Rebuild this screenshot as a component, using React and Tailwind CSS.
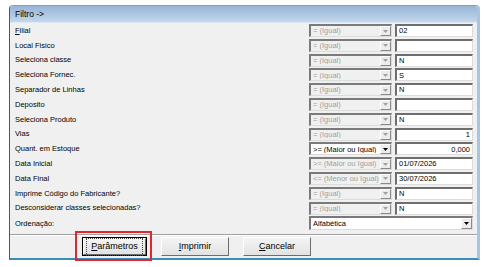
import React from "react";

const rows = [
  { label: <><u>F</u>ilial</>, op: "= (Igual)", value: "02" },
  { label: "Local Fisico", op: "= (Igual)", value: "" },
  { label: "Seleciona classe", op: "= (Igual)", value: "N" },
  { label: "Seleciona Fornec.", op: "= (Igual)", value: "S" },
  { label: "Separador de Linhas", op: "= (Igual)", value: "N" },
  { label: "Deposito", op: "= (Igual)", value: "" },
  { label: "Seleciona Produto", op: "= (Igual)", value: "N" },
  { label: "Vias", op: "= (Igual)", value: "1", right: true },
  { label: "Quant. em Estoque", op: ">= (Maior ou Igual)", value: "0,000", right: true, enabled: true },
  { label: "Data Inicial", op: ">= (Maior ou Igual)", value: "01/07/2026" },
  { label: "Data Final", op: "<= (Menor ou Igual)", value: "30/07/2026" },
  { label: "Imprime Código do Fabricante?", op: "= (Igual)", value: "N" },
  { label: "Desconsiderar classes selecionadas?", op: "= (Igual)", value: "N" },
];

function Arrow({ enabled }) {
  return (
    <svg width="5" height="3" viewBox="0 0 5 3">
      <path d="M0 0H5L2.5 3Z" fill={enabled ? "#000" : "#a0a0a0"} />
    </svg>
  );
}

function Combo({ op, enabled, className = "h-[13px]" }) {
  return (
    <div
      className={`${className} flex items-center border-t-[2px] border-l-[2px] border-t-[#7a7a7a] border-l-[#7a7a7a] border-b border-r border-b-[#dcdcdc] border-r-[#dcdcdc] ${
        enabled ? "bg-white" : "bg-[#f0f0f0]"
      }`}
    >
      <span
        className={`flex-1 pl-[2px] text-[7.5px] leading-none whitespace-nowrap overflow-hidden ${
          enabled ? "text-black" : "text-[#a0a0a0]"
        }`}
      >
        {op}
      </span>
      <div className="w-[11px] h-full flex items-center justify-center bg-[#ececec] border-t border-l border-t-white border-l-white border-b border-r border-b-[#8a8a8a] border-r-[#8a8a8a]">
        <Arrow enabled={enabled} />
      </div>
    </div>
  );
}

function Input({ value, right }) {
  return (
    <div
      className={`h-[13px] flex items-center bg-white border-t-[2px] border-l-[2px] border-t-[#6e6e6e] border-l-[#6e6e6e] border-b border-r border-b-[#dcdcdc] border-r-[#dcdcdc] px-[2px] text-[7.5px] leading-none text-black ${
        right ? "justify-end" : "justify-start"
      }`}
    >
      {value}
    </div>
  );
}

function Button({ children, w, def }) {
  const inner = (
    <div
      className={`h-full w-full flex items-center justify-center bg-gradient-to-b from-[#f4f4f4] to-[#e2e2e2] border-t border-l border-t-white border-l-white border-b border-r border-b-[#6d6d6d] border-r-[#6d6d6d] text-[9px] text-black`}
    >
      {def ? (
        <div className="px-[4px] py-[1px] border border-dotted border-[#444]">{children}</div>
      ) : (
        children
      )}
    </div>
  );
  return (
    <div className={`relative h-[19px] ${w} ${def ? "border border-black" : ""}`}>
      {inner}
      {def && (
        <div className="absolute -left-[8px] -right-[6px] -top-[7px] -bottom-[6px] border-2 border-[#e3262b]" />
      )}
    </div>
  );
}

export default function App() {
  return (
    <div className="w-[487px] h-[267px] bg-white font-['Liberation_Sans',Arial,sans-serif] pt-[5px] pl-[9px]">
      <div className="w-[471px] rounded-t-[4px] bg-[#f0f0f0] border-t border-t-[#9a9a9a] border-l border-l-[#4d5866] border-r-[3px] border-r-[#a6c6df] border-b-[2px] border-b-[#3a8db5]">
        <div className="h-[16px] rounded-tl-[3px] rounded-tr-[2px] bg-gradient-to-b from-[#98b5d5] to-[#c3d7ed] pl-[5px] flex items-center text-[8.5px] text-black">
          Filtro -&gt;
        </div>
        <div className="h-[1px] bg-[#dfe9f4]" />
        <div className="pt-[1px] pl-[5px] grid grid-cols-[291px_83px_78px] gap-x-[3px] gap-y-[1.8px]">
          {rows.map((r, i) => (
            <React.Fragment key={i}>
              <div className="h-[13px] flex items-center text-[7.5px] text-black whitespace-nowrap">
                {r.label}
              </div>
              <Combo op={r.op} enabled={r.enabled} />
              <Input value={r.value} right={r.right} />
            </React.Fragment>
          ))}
          <div className="h-[14px] flex items-center text-[7.5px] text-black">Ordenação:</div>
          <div className="col-span-2">
            <Combo op={<span className="text-black">Alfabética</span>} enabled className="h-[14px]" />
          </div>
        </div>
        <div className="mt-[4px] h-[1px] bg-[#a0a0a0]" />
        <div className="h-[1px] bg-white" />
        <div className="pt-[1px] pb-[2px] pl-[72px] flex gap-[14px]">
          <Button w="w-[65px]" def>
            <span><u>P</u>arâmetros</span>
          </Button>
          <Button w="w-[68px]">
            <span><u>I</u>mprimir</span>
          </Button>
          <Button w="w-[68px]">
            <span><u>C</u>ancelar</span>
          </Button>
        </div>
      </div>
    </div>
  );
}
